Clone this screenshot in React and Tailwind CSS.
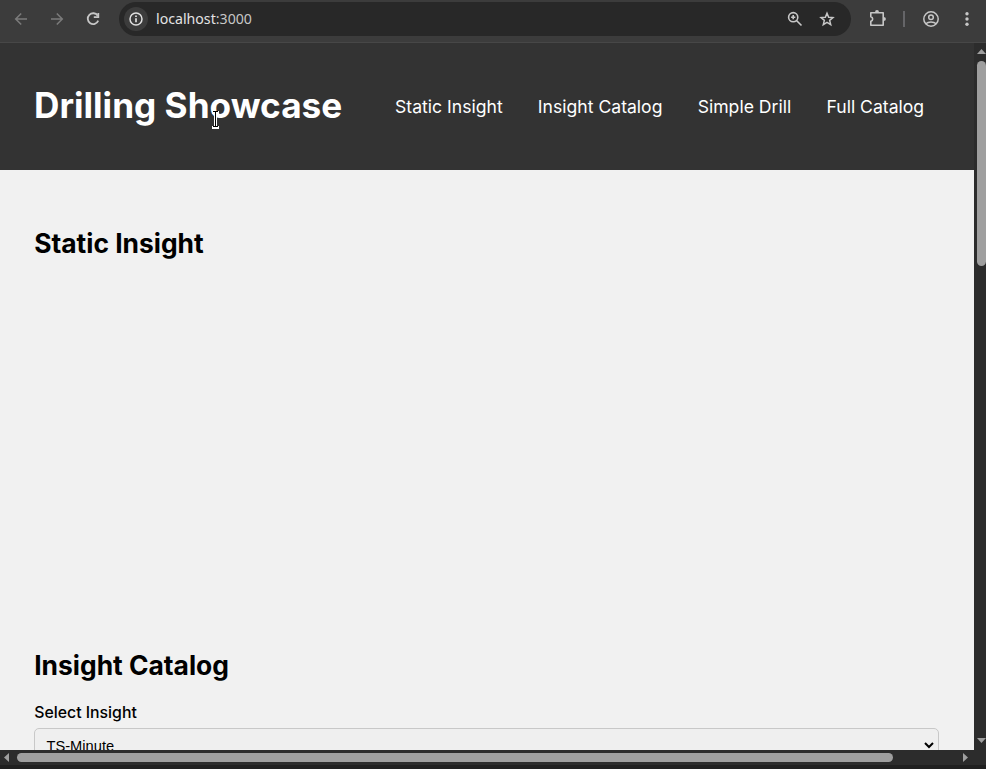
import React from "react";

const navLinks = ["Static Insight", "Insight Catalog", "Simple Drill", "Full Catalog"];

function Glyph({ children, className = "text-[#c7c7c7]", w = 1.6 }) {
  return (
    <svg width="18" height="18" viewBox="0 0 18 18" fill="none" stroke="currentColor" strokeWidth={w} className={`shrink-0 ${className}`}>
      {children}
    </svg>
  );
}

function BrowserBar() {
  return (
    <div className="flex h-[43px] shrink-0 items-start border-b border-[#474747] bg-[#3c3c3c]">
      <div className="flex h-[38px] w-[119px] items-center gap-[18px] pl-3">
        <Glyph className="text-[#7b7b7b]" w={1.5}><path d="M15 9H4M9.2 3.5L3.7 9l5.5 5.5" /></Glyph>
        <Glyph className="text-[#7b7b7b]" w={1.5}><path d="M3 9h11M8.8 3.5L14.3 9l-5.5 5.5" /></Glyph>
        <Glyph w={1.8}><path d="M13.7 5.7A5.4 5.4 0 1 0 14.2 10.6" /><path d="M14.3 3v4.2H9.8" /></Glyph>
      </div>
      <div className="mt-0.5 flex h-[34px] w-[732px] items-center rounded-full bg-[#282828] pl-[5px] pr-[15px]">
        <span className="flex size-6 items-center justify-center rounded-full bg-[#3c3c3c]">
          <Glyph className="text-[#e0e0e0]" w={1.5}><circle cx="9" cy="9" r="6" /><path d="M9 8.2v4M9 5.4v1.6" strokeWidth="1.7" /></Glyph>
        </span>
        <span className="ml-2 flex-1 font-['Noto_Sans',sans-serif] text-[14.15px] leading-5 text-[#c7c7c7]"><span className="text-[#e3e3e3]">localhost</span>:3000</span>
        <Glyph><circle cx="7.2" cy="7.2" r="4.6" /><path d="M10.5 10.5l5 5M7.2 5.1v4.2M5.1 7.2h4.2" /></Glyph>
        <Glyph className="ml-[14px] text-[#c7c7c7]" w={1.5}><path d="M9 3.2l1.65 4 4.3.35-3.3 2.8 1.05 4.2L9 12.3l-3.7 2.25 1.05-4.2-3.3-2.8 4.3-.35z" /></Glyph>
      </div>
      <div className="flex h-[38px] flex-1 items-center pl-[17px]">
        <Glyph className="-mt-0.5 text-[#c7c7c7]" w={1.6}><path d="M2.8 3.8H15.2V16.2H2.8V12.4C5.3 11.8 5.3 8.4 2.8 7.8Z" strokeLinejoin="round" /><path d="M7 3.4a2 2.4 0 0 1 4 0zM15.6 8a2.3 2 0 0 1 0 4z" fill="currentColor" stroke="none" /></Glyph>
        <span className="ml-[17px] h-4 w-0.5 bg-[#656568]" />
        <Glyph className="ml-[17px] text-[#c7c7c7]" w={1.5}><circle cx="9" cy="9" r="7.2" /><circle cx="9" cy="7.2" r="2.3" /><path d="M3.8 13.8c2.7-2.5 7.7-2.5 10.4 0" /></Glyph>
        <Glyph className="ml-[18px] text-[#c7c7c7]"><g fill="currentColor" stroke="none"><circle cx="9" cy="3.7" r="1.7" /><circle cx="9" cy="9" r="1.7" /><circle cx="9" cy="14.3" r="1.7" /></g></Glyph>
      </div>
    </div>
  );
}

function Arrow({ d, w, h, className }) {
  return <svg width={w} height={h} viewBox={`0 0 ${w} ${h}`} className={`shrink-0 ${className}`}><path d={d} fill="#9f9f9f" /></svg>;
}

export default function App() {
  return (
    <div className="relative flex h-[769px] w-[986px] flex-col overflow-hidden bg-[#202020] font-[Inter,sans-serif]">
      <BrowserBar />
      <div className="flex h-[707px]">
        <main className="w-[974px] overflow-hidden bg-[#f1f1f1] text-black">
          <header className="flex h-[127px] items-center bg-[#333333] pl-[34px] text-white">
            <h1 className="mb-[2px] w-[361px] whitespace-nowrap text-[35.2px] font-bold leading-[43px]">Drilling Showcase</h1>
            <nav className="flex gap-[35.2px] text-[17.6px] leading-[21px]">
              {navLinks.map((label) => <a key={label} className="whitespace-nowrap">{label}</a>)}
            </nav>
          </header>
          <section className="h-[422px] px-[34.2px] pt-[57px]">
            <h2 className="text-[26.4px] font-bold leading-8">Static Insight</h2>
          </section>
          <section className="pl-[34px] pr-[35px] pt-[57px]">
            <h2 className="pl-[0.2px] text-[26.4px] font-bold leading-8">Insight Catalog</h2>
            <label className="mt-[22px] block pl-[0.2px] text-[15.84px] font-medium leading-[20px]">Select Insight</label>
            <div className="mt-[5px] flex h-[35px] items-center justify-between rounded-[5px] border border-[#c8c8c8] bg-[#efefef] pl-[11.5px] pr-[4px] font-['Liberation_Sans',sans-serif] text-[14.67px]">
              <span>TS-Minute</span>
              <svg width="10" height="7" viewBox="0 0 10 7" fill="none" stroke="#000" strokeWidth="2"><path d="M1 1l4 4 4-4" /></svg>
            </div>
          </section>
        </main>
        <div className="flex w-3 flex-col bg-[#2c2c2c] pl-[3px] pt-[6px]">
          <Arrow d="M0 5L4.5 0 9 5z" w={9} h={5} className="" />
          <div className="mt-[7px] h-[205px] w-[9px] rounded-full bg-[#9f9f9f]" />
          <Arrow d="M0 0h9L4.5 5z" w={9} h={5} className="mb-[7px] mt-auto" />
        </div>
      </div>
      <div className="flex h-[15px] items-center bg-[#2c2c2c] pl-1">
        <Arrow d="M5 0v9L0 4.5z" w={5} h={9} className="" />
        <div className="ml-2 h-[9px] w-[876px] rounded-full bg-[#9f9f9f]" />
        <Arrow d="M0 0v9l5-4.5z" w={5} h={9} className="ml-[70px]" />
      </div>
      <svg className="absolute left-[212px] top-[110px]" width="7" height="19" viewBox="0 0 7 19" fill="none" shapeRendering="crispEdges">
        <path d="M0 2.5h7M3.5 2.5v14M0 17h7" stroke="#fff" strokeWidth="3" />
        <path d="M1 1.5h5M3.5 1.5v15M1 16.5h5" stroke="#000" strokeWidth="1" />
      </svg>
    </div>
  );
}
